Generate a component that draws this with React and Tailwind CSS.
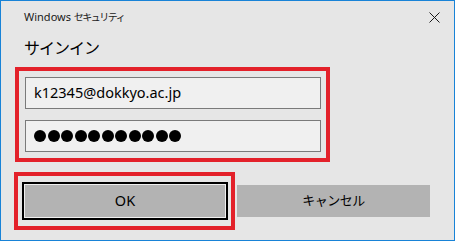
export default function App() {
  const dots = Array.from({ length: 11 });
  return (
    <div className="w-[456px] h-[242px] bg-white font-['Noto_Sans','Noto_Sans_CJK_JP',sans-serif] text-black">
      {/* Dialog window */}
      <div className="w-[455px] h-[241px] border border-[#1883d7] bg-[#e6e6e6] flex flex-col">
        {/* Title bar */}
        <div className="mt-[7px] h-[18px] pl-[23px] pr-[14px] flex items-center justify-between">
          <span className="text-[11px] leading-[18px] text-[#1a1a1a]">
            Windows <span className="text-[10px] tracking-[-1.5px]">セキュリティ</span>
          </span>
          <svg width="11" height="11" viewBox="0 0 11 11" className="text-[#1a1a1a]">
            <path d="M0.5 0.5 L10.5 10.5 M10.5 0.5 L0.5 10.5" stroke="currentColor" strokeWidth="1" fill="none" />
          </svg>
        </div>

        {/* Heading */}
        <div className="mt-[11px] h-[22px] pl-[23px] text-[16px] leading-[22px] tracking-[-1px]">サインイン</div>

        {/* Credentials (highlighted) */}
        <div className="mt-[8px] ml-[14px] w-[315px] border-4 border-[#e3212a] pt-[6px] pb-[6px] pl-[6px] flex flex-col gap-[11px]">
          <div className="w-[296px] h-[32px] border border-[#7a7a7a] bg-[#f0f0f0] px-[8px] flex items-center text-[14.5px]">
            k12345@dokkyo.ac.jp
          </div>
          <div className="w-[296px] h-[32px] border border-[#7a7a7a] bg-[#f0f0f0] px-[8px] flex items-center gap-[1.5px]">
            {dots.map((_, i) => (
              <div key={i} className="w-[12px] h-[12px] rounded-full bg-black" />
            ))}
          </div>
        </div>

        {/* Buttons */}
        <div className="mt-[10px] ml-[13px] flex items-center">
          <div className="w-[221px] h-[58px] border-4 border-[#e3212a] pt-[6px] pl-[4px]">
            <div className="w-[206px] h-[38px] border-2 border-black bg-[#f0f0f0] p-px">
              <div className="w-full h-full bg-[#b3b3b3] flex items-center justify-center text-[14.5px]">OK</div>
            </div>
          </div>
          <div className="ml-[2px] w-[193px] h-[32px] bg-[#b3b3b3] flex items-center justify-center text-[13px] tracking-[-0.5px]">
            キャンセル
          </div>
        </div>
      </div>
    </div>
  );
}
